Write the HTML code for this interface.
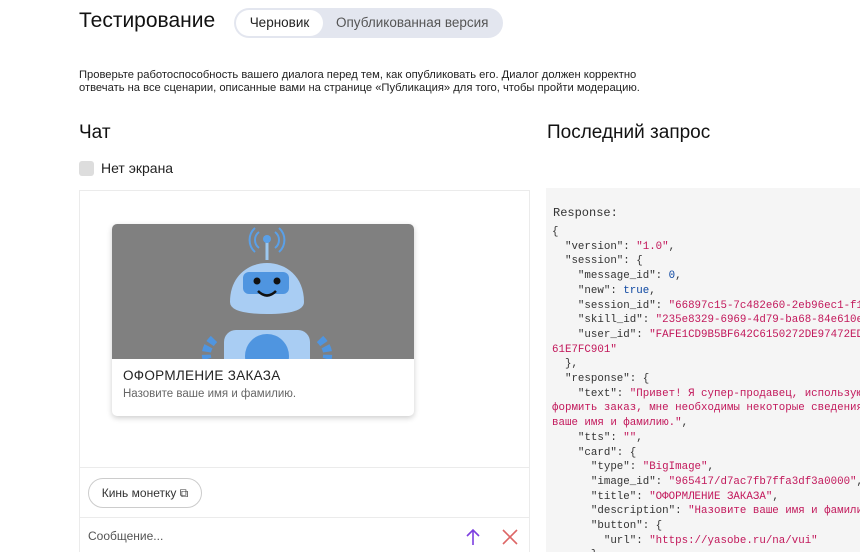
<!DOCTYPE html>
<html style="overflow:hidden;height:552px"><head><meta charset="utf-8"><style>
body{margin:0;width:860px;height:552px;overflow:hidden;background:#fff;font-family:"Liberation Sans",sans-serif;position:relative;color:#000}
.a{position:absolute}
.code{font-family:"Liberation Mono",monospace;font-size:10.8px;line-height:14.7px;white-space:pre;color:#333}
.s{color:#c2185b}.n{color:#0d47a1}
</style></head><body>
<div class="a" style="left:79px;top:9px;font-size:21px;color:#111">Тестирование</div>
<div class="a" style="left:234px;top:8px;width:269px;height:30px;border-radius:15px;background:#e3e6ef"></div>
<div class="a" style="left:236px;top:10px;width:87px;height:26px;border-radius:13px;background:#fff;font-size:13.5px;line-height:26px;text-align:center;color:#222">Черновик</div>
<div class="a" style="left:336px;top:10px;font-size:13.5px;line-height:26px;color:#555">Опубликованная версия</div>
<div class="a" style="left:79px;top:69px;font-size:11.2px;line-height:13px;color:#222">Проверьте работоспособность вашего диалога перед тем, как опубликовать его. Диалог должен корректно<br>отвечать на все сценарии, описанные вами на странице «Публикация» для того, чтобы пройти модерацию.</div>
<div class="a" style="left:79px;top:122px;font-size:19px;color:#111">Чат</div>
<div class="a" style="left:547px;top:122px;font-size:19px;color:#111">Последний запрос</div>
<div class="a" style="left:79px;top:161px;width:15px;height:15px;border-radius:3px;background:#ddd"></div>
<div class="a" style="left:101px;top:160px;font-size:14px;color:#222">Нет экрана</div>
<div class="a" style="left:79px;top:190px;width:449px;height:370px;border:1px solid #ebebeb"></div>
<div class="a" style="left:112px;top:224px;width:302px;height:192px;border-radius:5px;background:#fff;box-shadow:0 2px 6px rgba(0,0,0,.2);overflow:hidden">
<svg width="302" height="135" style="display:block;background:#808080">
<g fill="none" stroke="#5aa0e8" stroke-width="2"><path d="M147 8a10 10 0 0 0 0 16M143 4a16 16 0 0 0 0 24M163 8a10 10 0 0 1 0 16M167 4a16 16 0 0 1 0 24"/></g>
<line x1="155" y1="18" x2="155" y2="36" stroke="#9cc8f0" stroke-width="3"/><circle cx="155" cy="15" r="4" fill="#5aa0e8"/>
<path d="M118 78 C118 26 192 26 192 78 Q192 90 155 90 Q118 90 118 78Z" fill="#a9cdf3"/>
<rect x="131" y="48" width="46" height="22" rx="6" fill="#4f95e0"/>
<circle cx="145" cy="57" r="3.5" fill="#111"/><circle cx="165" cy="57" r="3.5" fill="#111"/>
<path d="M146 67 Q155 76 164 67" stroke="#111" stroke-width="2.5" fill="none"/>
<rect x="112" y="106" width="86" height="50" rx="12" fill="#a9cdf3"/>
<circle cx="155" cy="132" r="22" fill="#4f95e0"/>
<path d="M102 115 Q92 125 95 135M208 115 Q218 125 215 135" stroke="#4f95e0" stroke-width="9" stroke-dasharray="6 3" fill="none"/>
</svg>
<div style="position:absolute;left:11px;top:144px;font-size:13.5px;color:#222;letter-spacing:.3px">ОФОРМЛЕНИЕ ЗАКАЗА</div>
<div style="position:absolute;left:11px;top:164px;font-size:11.5px;color:#666">Назовите ваше имя и фамилию.</div>
</div>
<div class="a" style="left:80px;top:467px;width:449px;border-top:1px solid #ebebeb"></div>
<div class="a" style="left:88px;top:478px;width:114px;height:30px;border:1px solid #ccc;border-radius:15px;box-sizing:border-box;font-size:12px;line-height:28px;text-align:center;color:#333">Кинь монетку ⧉</div>
<div class="a" style="left:80px;top:517px;width:449px;border-top:1px solid #ebebeb"></div>
<div class="a" style="left:88px;top:529px;font-size:12px;color:#555">Сообщение...</div>
<svg class="a" style="left:463px;top:527px" width="20" height="20"><path d="M10 18V3M4 9l6-6 6 6" stroke="#7d3fe0" stroke-width="1.6" fill="none"/></svg>
<svg class="a" style="left:500px;top:527px" width="20" height="20"><path d="M3 3l14 14M17 3L3 17" stroke="#d66" stroke-width="1.6"/></svg>
<div class="a" style="left:546px;top:188px;width:314px;height:364px;background:#f5f5f5;overflow:hidden">
<div class="a code" style="left:7px;top:18px;font-size:12px">Response:</div>
<div class="a code" style="left:6px;top:37px">{
  "version": <span class="s">"1.0"</span>,
  "session": {
    "message_id": <span class="n">0</span>,
    "new": <span class="n">true</span>,
    "session_id": <span class="s">"66897c15-7c482e60-2eb96ec1-f1</span>
    "skill_id": <span class="s">"235e8329-6969-4d79-ba68-84e610e</span>
    "user_id": <span class="s">"FAFE1CD9B5BF642C6150272DE97472ED</span>
<span class="s">61E7FC901"</span>
  },
  "response": {
    "text": <span class="s">"Привет! Я супер-продавец, использую</span>
<span class="s">формить заказ, мне необходимы некоторые сведения</span>
<span class="s">ваше имя и фамилию."</span>,
    "tts": <span class="s">""</span>,
    "card": {
      "type": <span class="s">"BigImage"</span>,
      "image_id": <span class="s">"965417/d7ac7fb7ffa3df3a0000"</span>,
      "title": <span class="s">"ОФОРМЛЕНИЕ ЗАКАЗА"</span>,
      "description": <span class="s">"Назовите ваше имя и фамили</span>
      "button": {
        "url": <span class="s">"https://yasobe.ru/na/vui"</span>
      }
    }</div>
</div>
</body></html>
